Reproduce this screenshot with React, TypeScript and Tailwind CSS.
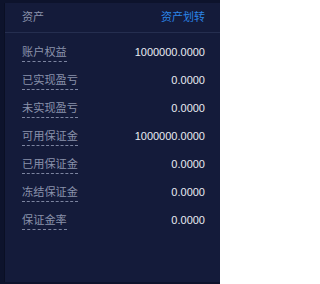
import React from "react";

const rows: [string, string][] = [
  ["账户权益", "1000000.0000"],
  ["已实现盈亏", "0.0000"],
  ["未实现盈亏", "0.0000"],
  ["可用保证金", "1000000.0000"],
  ["已用保证金", "0.0000"],
  ["冻结保证金", "0.0000"],
  ["保证金率", "0.0000"],
];

const font = { fontFamily: '"Liberation Sans", "Noto Sans CJK SC", sans-serif' };

export default function App() {
  return (
    <div className="w-[220px] h-[284px] bg-[#0d132c] pl-[4px] pt-[3px] pb-[2px]" style={font}>
      <div className="h-full bg-[#141b3a] border-l border-[#0a0f24]">
        <div className="h-[30px] flex items-center justify-between pl-[17px] pr-[15px] border-b border-[#252e4f] text-[11px]">
          <span className="text-[#8a92ab]">资产</span>
          <span className="text-[#2b84e6]">资产划转</span>
        </div>
        <div className="pt-[11px] pl-[17px] pr-[15px] flex flex-col">
          {rows.map(([label, value]) => (
            <div key={label} className="h-[28px] flex items-start justify-between">
              <span className="text-[11.2px] leading-[16px] text-[#8a92ab] border-b border-dashed border-[#7c84a0] pb-[1px]">
                {label}
              </span>
              <span className="text-[11px] leading-[16px] text-[#e8ebf2]">{value}</span>
            </div>
          ))}
        </div>
      </div>
    </div>
  );
}
